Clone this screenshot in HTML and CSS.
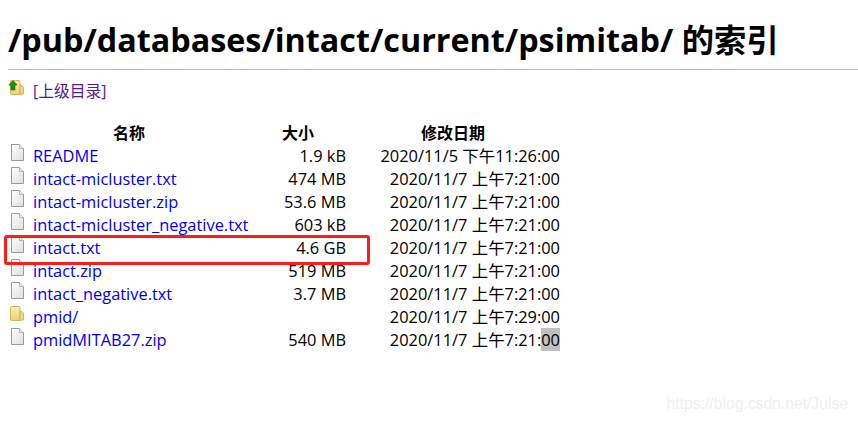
FILE: index.html
```html
<!DOCTYPE html>
<html lang="zh-CN">
<head>
<meta charset="utf-8">
<title>/pub/databases/intact/current/psimitab/ 的索引</title>
<link rel="stylesheet" href="styles.css">
</head>
<body>
<svg class="defs" width="0" height="0" aria-hidden="true">
  <defs>
    <linearGradient id="pg" x1="0" y1="0" x2="1" y2="1"><stop offset="0" stop-color="#fff"/><stop offset="1" stop-color="#dedede"/></linearGradient>
    <linearGradient id="fg" x1="0" y1="0" x2="0" y2="1"><stop offset="0" stop-color="#fdeeb0"/><stop offset="1" stop-color="#f0cf72"/></linearGradient>
    <symbol id="file" viewBox="0 0 16 17"><path d="M3.500 .5H11.500L15.500 4.500V16.500H3.500Z" fill="url(#pg)" stroke="#9a9a9a"/><path d="M11.500 .5V4.500H15.500" fill="#eee" stroke="#b5b5b5"/></symbol>
    <symbol id="folder" viewBox="0 0 16 17"><path d="M2.500 2.500Q2.500 1.500 3.500 1.500H11Q12 1.500 12 2.500V15.500H3.500Q2.500 15.500 2.500 14.500Z" fill="url(#fg)" stroke="#d4b45e"/><path d="M12 5.500L15.500 8V15L12 15.500Z" fill="#f3d680" stroke="#d4b45e"/></symbol>
  </defs>
</svg>
<h1 class="title">/pub/databases/intact/current/psimitab/ 的索引</h1>
<hr class="rule">
<div class="up">
  <svg class="icon" viewBox="0 0 16 17"><use href="#folder" y="-1"/><path d="M5 0.500L9.200 5H7V10H3V5H.8Z" fill="#0d9a12" stroke="#0a6e0e" stroke-width=".6"/></svg>
  <a class="up-link" href="#">[上级目录]</a>
</div>
<table class="listing">
  <thead>
    <tr><th>名称</th><th>大小</th><th>修改日期</th></tr>
  </thead>
  <tbody>
    <tr><td><div class="entry"><svg class="icon"><use href="#file"/></svg><a href="#">README</a></div></td><td class="num">1.9 kB</td><td class="num">2020/11/5 下午11:26:00</td></tr>
    <tr><td><div class="entry"><svg class="icon"><use href="#file"/></svg><a href="#">intact-micluster.txt</a></div></td><td class="num">474 MB</td><td class="num">2020/11/7 上午7:21:00</td></tr>
    <tr><td><div class="entry"><svg class="icon"><use href="#file"/></svg><a href="#">intact-micluster.zip</a></div></td><td class="num">53.6 MB</td><td class="num">2020/11/7 上午7:21:00</td></tr>
    <tr><td><div class="entry"><svg class="icon"><use href="#file"/></svg><a href="#">intact-micluster_negative.txt</a></div></td><td class="num">603 kB</td><td class="num">2020/11/7 上午7:21:00</td></tr>
    <tr><td><div class="entry"><svg class="icon"><use href="#file"/></svg><a href="#">intact.txt</a></div></td><td class="num">4.6 GB</td><td class="num">2020/11/7 上午7:21:00</td></tr>
    <tr><td><div class="entry"><svg class="icon"><use href="#file"/></svg><a href="#">intact.zip</a></div></td><td class="num">519 MB</td><td class="num">2020/11/7 上午7:21:00</td></tr>
    <tr><td><div class="entry"><svg class="icon"><use href="#file"/></svg><a href="#">intact_negative.txt</a></div></td><td class="num">3.7 MB</td><td class="num">2020/11/7 上午7:21:00</td></tr>
    <tr><td><div class="entry"><svg class="icon"><use href="#folder"/></svg><a href="#">pmid/</a></div></td><td class="num"></td><td class="num">2020/11/7 上午7:29:00</td></tr>
    <tr><td><div class="entry"><svg class="icon"><use href="#file"/></svg><a href="#">pmidMITAB27.zip</a></div></td><td class="num">540 MB</td><td class="num">2020/11/7 上午7:21:<span class="sel">00</span></td></tr>
  </tbody>
</table>
<div class="mark"></div>
<div class="watermark">https://blog.csdn.net/Julse</div>
</body>
</html>
```
FILE: styles.css
```css
html, body { height: 100%; }
body {
  margin: 0;
  padding: 0 0 0 8px;
  background: #fff;
  color: #000;
  font-family: "Open Sans", "Noto Sans CJK SC", sans-serif;
  font-size: 16px;
  overflow: hidden;
  position: relative;
}
.defs { position: absolute; }
.title {
  margin: 0;
  padding-top: 16px;
  font-size: 32.300px;
  line-height: 46px;
  font-weight: 700;
  white-space: nowrap;
}
.rule {
  margin: 7px 0 0;
  border: 0;
  height: 1px;
  background: #c0c0c0;
}
.up {
  display: flex;
  align-items: flex-start;
  margin-top: 10px;
  height: 20px;
}
.icon {
  width: 16px;
  height: 17px;
  flex: none;
  display: block;
}
.up-link {
  margin-left: 9px;
  margin-top: 1px;
  color: #551a8b;
  text-decoration: none;
  font-size: 15.800px;
  line-height: 20px;
}
.listing {
  border-collapse: collapse;
  table-layout: fixed;
  width: 552px;
  margin-top: 22px;
  font-size: 16.400px;
}
.listing th, .listing td {
  padding: 0;
  height: 23px;
  line-height: 23px;
  white-space: nowrap;
  font-weight: 400;
}
.listing th {
  font-weight: 700;
  font-size: 16px;
  height: 22px;
  line-height: 22px;
  text-align: center;
}
.listing th:nth-child(1) { width: 242px; }
.listing th:nth-child(2) { width: 96px; }
.listing th:nth-child(3) { width: 214px; }
.entry {
  display: flex;
  align-items: flex-start;
  gap: 9px;
  height: 23px;
}
.num { text-align: right; }
.listing a { color: #0000ee; text-decoration: none; }
.sel { background: #c0c0c0; }
.mark {
  position: absolute;
  left: 4px;
  top: 235px;
  width: 366px;
  height: 30px;
  box-sizing: border-box;
  border: 3px solid #fb1f1b;
  border-radius: 3px;
}
.watermark {
  position: absolute;
  right: 10px;
  top: 394px;
  font-family: "Liberation Sans", sans-serif;
  font-size: 15.700px;
  line-height: 20px;
  color: #efefef;
}
```
